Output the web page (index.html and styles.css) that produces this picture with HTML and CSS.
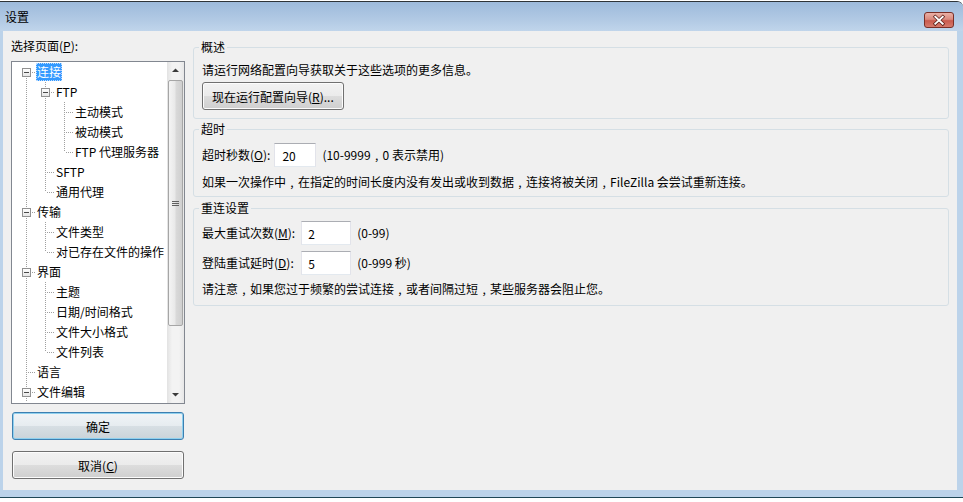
FILE: index.html
```html
<!DOCTYPE html>
<html lang="zh-CN">
<head>
  <meta charset="UTF-8" />
  <meta name="viewport" content="width=device-width, initial-scale=1.0" />
  <title>设置</title>
  <link rel="stylesheet" href="styles.css">
</head>
<body>
  <div class="window">
    <div class="titlebar">
      <span class="title">设置</span>
      <button class="close" aria-label="关闭">
        <svg width="30" height="15" viewBox="0 0 30 15">
          <path d="M11 3.5 L19 11 M19 3.5 L11 11" stroke="#5a1f18" stroke-width="3.6" stroke-linecap="square" fill="none" />
          <path d="M11 3.5 L19 11 M19 3.5 L11 11" stroke="#fff" stroke-width="2" stroke-linecap="square" fill="none" />
        </svg>
      </button>
    </div>

    <div class="client">
      <div class="side">
        <div class="side-label">选择页面(<u>P</u>):</div>

        <div class="tree">
          <div class="tree-list">
            <div class="row"><span class="g g-last g-f"><i class="box"></i></span><span class="label selected">连接</span></div>
            <div class="row"><span class="g g-i"></span><span class="g g-last g-t"><i class="box"></i></span><span class="label">FTP</span></div>
            <div class="row"><span class="g g-i"></span><span class="g g-i"></span><span class="g g-last g-t"></span><span class="label">主动模式</span></div>
            <div class="row"><span class="g g-i"></span><span class="g g-i"></span><span class="g g-last g-t"></span><span class="label">被动模式</span></div>
            <div class="row"><span class="g g-i"></span><span class="g g-i"></span><span class="g g-last g-l"></span><span class="label">FTP 代理服务器</span></div>
            <div class="row"><span class="g g-i"></span><span class="g g-last g-t"></span><span class="label">SFTP</span></div>
            <div class="row"><span class="g g-i"></span><span class="g g-last g-l"></span><span class="label">通用代理</span></div>
            <div class="row"><span class="g g-last g-t"><i class="box"></i></span><span class="label">传输</span></div>
            <div class="row"><span class="g g-i"></span><span class="g g-last g-t"></span><span class="label">文件类型</span></div>
            <div class="row"><span class="g g-i"></span><span class="g g-last g-l"></span><span class="label">对已存在文件的操作</span></div>
            <div class="row"><span class="g g-last g-t"><i class="box"></i></span><span class="label">界面</span></div>
            <div class="row"><span class="g g-i"></span><span class="g g-last g-t"></span><span class="label">主题</span></div>
            <div class="row"><span class="g g-i"></span><span class="g g-last g-t"></span><span class="label">日期/时间格式</span></div>
            <div class="row"><span class="g g-i"></span><span class="g g-last g-t"></span><span class="label">文件大小格式</span></div>
            <div class="row"><span class="g g-i"></span><span class="g g-last g-l"></span><span class="label">文件列表</span></div>
            <div class="row"><span class="g g-last g-t"></span><span class="label">语言</span></div>
            <div class="row"><span class="g g-last g-t"><i class="box"></i></span><span class="label">文件编辑</span></div>
          </div>

          <div class="vscroll">
            <div class="sb-btn">
              <svg width="17" height="17" viewBox="0 0 17 17"><polygon points="5,10 12,10 8.5,6.5" fill="#3c3c3c" /></svg>
            </div>
            <div class="sb-thumb"><span class="grip"></span></div>
            <div class="sb-track"></div>
            <div class="sb-btn">
              <svg width="17" height="17" viewBox="0 0 17 17"><polygon points="5,7 12,7 8.5,10.5" fill="#3c3c3c" /></svg>
            </div>
          </div>
        </div>

        <button class="btn btn-side btn-default">确定</button>
        <button class="btn btn-side btn-cancel">取消(<u>C</u>)</button>
      </div>

      <div class="pages">
        <fieldset class="group group-overview">
          <legend>概述</legend>
          <p class="line">请运行网络配置向导获取关于这些选项的更多信息。</p>
          <button class="btn btn-wizard">现在运行配置向导(<u>R</u>)...</button>
        </fieldset>

        <fieldset class="group group-timeout">
          <legend>超时</legend>
          <div class="field-row">
            <label for="timeout">超时秒数(<u>O</u>):</label>
            <input type="text" id="timeout" class="num num-wide" value="20" />
            <span>(10-9999<span class="fw">,</span>0 表示禁用)</span>
          </div>
          <p class="line note">如果一次操作中<span class="fw">,</span>在指定的时间长度内没有发出或收到数据<span class="fw">,</span>连接将被关闭<span class="fw">,</span>FileZilla 会尝试重新连接。</p>
        </fieldset>

        <fieldset class="group group-reconnect">
          <legend>重连设置</legend>
          <div class="field-grid">
            <label for="retries">最大重试次数(<u>M</u>):</label>
            <input type="text" id="retries" class="num" value="2" />
            <span>(0-99)</span>
            <label for="delay">登陆重试延时(<u>D</u>):</label>
            <input type="text" id="delay" class="num" value="5" />
            <span>(0-999 秒)</span>
          </div>
          <p class="line note">请注意<span class="fw">,</span>如果您过于频繁的尝试连接<span class="fw">,</span>或者间隔过短<span class="fw">,</span>某些服务器会阻止您。</p>
        </fieldset>
      </div>
    </div>
  </div>
</body>
</html>
```

FILE: styles.css
```css
body {
  margin: 0;
  background-color: #fff;
  font-family: "Noto Sans CJK SC", "Noto Sans", sans-serif;
  font-size: 12px;
  color: #000;
}

.window {
  margin-top: 1px;
  width: 963px;
  height: 495px;
  border-top: 1px solid #2e3338;
  border-bottom: 1px solid #1f4756;
  border-top-right-radius: 6px;
  background-color: #bcd3ea;
  display: flex;
  flex-direction: column;
}

.titlebar {
  height: 29px;
  flex: none;
  display: flex;
  align-items: center;
  justify-content: space-between;
  padding: 0 9px 0 5px;
  background: linear-gradient(#9dbadb, #b1c9e4 60%, #c0d5eb);
  border-top-right-radius: 6px;
}

.title {
  line-height: 16px;
}

.close {
  align-self: flex-end;
  margin-bottom: 3px;
  width: 30px;
  height: 16px;
  padding: 0;
  border: 1px solid #7a2f27;
  border-radius: 3px;
  background: linear-gradient(#eab0a6, #da8a7e 45%, #c95a4d 55%, #d67a6c);
  display: flex;
  align-items: center;
  justify-content: center;
}

.close svg {
  display: block;
}

.client {
  height: 459px;
  margin: 0 6px 0 3px;
  padding: 7px 8px 0 8px;
  box-sizing: border-box;
  background-color: #f0f0f0;
  display: flex;
  gap: 8px;
}

/* left column */

.side {
  width: 174px;
  flex: none;
  display: flex;
  flex-direction: column;
}

.side-label {
  line-height: 16px;
}

.tree {
  margin-top: 7px;
  height: 343px;
  box-sizing: border-box;
  border: 1px solid #828790;
  background-color: #fff;
  display: flex;
}

.tree-list {
  flex: 1;
  overflow: hidden;
  padding-left: 8px;
}

.row {
  height: 20px;
  display: flex;
  align-items: center;
  white-space: nowrap;
}

.g {
  flex: none;
  width: 19px;
  height: 20px;
  --vd: repeating-linear-gradient(#a0a0a0 0 1px, transparent 1px 2px);
  --hd: repeating-linear-gradient(90deg, #a0a0a0 0 1px, transparent 1px 2px);
}

.g-last {
  width: 16px;
}

.g-i {
  background: var(--vd) 6px 0 / 1px 20px no-repeat;
}

.g-t {
  background: var(--vd) 6px 0 / 1px 20px no-repeat,
              var(--hd) 8px 10px / 7px 1px no-repeat;
}

.g-l {
  background: var(--vd) 6px 0 / 1px 10px no-repeat,
              var(--hd) 8px 10px / 7px 1px no-repeat;
}

.g-f {
  background: var(--vd) 6px 10px / 1px 10px no-repeat,
              var(--hd) 8px 10px / 7px 1px no-repeat;
}

.box {
  display: block;
  width: 9px;
  height: 9px;
  box-sizing: border-box;
  margin: 6px 0 0 2px;
  border: 1px solid #919191;
  background: linear-gradient(#4a4a4a, #4a4a4a) center / 5px 1px no-repeat,
              linear-gradient(#fff, #e6e6e6);
}

.label {
  padding: 0 1px;
  line-height: 18px;
}

.label.selected {
  background-color: #3399ff;
  color: #fff;
  outline: 1px dotted #bcdcff;
  outline-offset: -1px;
}

.vscroll {
  width: 17px;
  flex: none;
  display: flex;
  flex-direction: column;
  background: linear-gradient(90deg, #e2e2e2, #f3f3f3 30%, #f3f3f3 70%, #e7e7e7);
}

.sb-btn {
  height: 17px;
  flex: none;
}

.sb-btn svg {
  display: block;
}

.sb-thumb {
  margin: 1px 1px 0;
  height: 246px;
  box-sizing: border-box;
  border: 1px solid #a6a6a6;
  border-radius: 2px;
  background: linear-gradient(90deg, #f4f4f4, #e9e9e9 45%, #d9d9d9 55%, #cfcfcf);
  display: flex;
  align-items: center;
  justify-content: center;
}

.grip {
  width: 7px;
  height: 5px;
  background: repeating-linear-gradient(#606060 0 1px, transparent 1px 2px);
}

.sb-track {
  flex: 1;
}

/* buttons */

.btn {
  font-family: inherit;
  font-size: 12px;
  color: #000;
  height: 28px;
  padding: 0 9px;
  border: 1px solid #707070;
  border-radius: 3px;
  background: linear-gradient(#f2f2f2, #ebebeb 50%, #dddddd 50%, #cfcfcf);
  box-shadow: inset 0 0 0 1px #fcfcfc;
  cursor: pointer;
}

.btn-side {
  width: 172px;
  margin-left: 1px;
}

.btn-default {
  margin-top: 8px;
  border-color: #3c7fb1;
  box-shadow: inset 0 0 0 1px #8fd0ee;
  background: linear-gradient(#f0f4f7, #e6ecf0 50%, #d7dfe4 50%, #cad3d9);
}

.btn-cancel {
  margin-top: 11px;
}

/* right column */

.pages {
  flex: 1;
  padding-top: 1px;
  display: flex;
  flex-direction: column;
}

.group {
  margin: 0;
  padding: 0 8px;
  min-width: 0;
  border: 1px solid #d5dfe5;
  border-radius: 3px;
}

.group legend {
  padding: 0 2px;
  margin-left: -3px;
  line-height: 16px;
}

.line {
  margin: 0;
  line-height: 16px;
}

/* full-width comma drawn centred in its cell */
.fw {
  display: inline-block;
  width: 12px;
  text-align: center;
}

.group-overview .line {
  margin-top: 7px;
}

.btn-wizard {
  margin-top: 4px;
  margin-bottom: 8px;
  align-self: flex-start;
}

.group-timeout {
  margin-top: 2px;
  padding-bottom: 6px;
}

.group-reconnect {
  margin-top: 3px;
  padding-bottom: 8px;
}

.field-row {
  margin-top: 6px;
  display: flex;
  align-items: center;
  gap: 4px;
  line-height: 16px;
}

.field-row > span {
  margin-left: 2px;
}

.field-grid {
  margin-top: 5px;
  display: grid;
  grid-template-columns: max-content 50px max-content;
  align-items: center;
  column-gap: 6px;
  row-gap: 6px;
  line-height: 16px;
}

.num {
  height: 24px;
  box-sizing: border-box;
  padding: 0 0 0 6px;
  font-family: inherit;
  font-size: 12px;
  color: #000;
  border: 1px solid #e2e3ea;
  border-top-color: #abadb3;
  border-bottom-color: #e3e9ef;
  background-color: #fff;
  outline: none;
}

.num-wide {
  width: 42px;
  padding-left: 7px;
}

.field-grid .num {
  width: 50px;
}

.note {
  margin-top: 7px;
}

.group-reconnect .note {
  margin-top: 6px;
}
```
